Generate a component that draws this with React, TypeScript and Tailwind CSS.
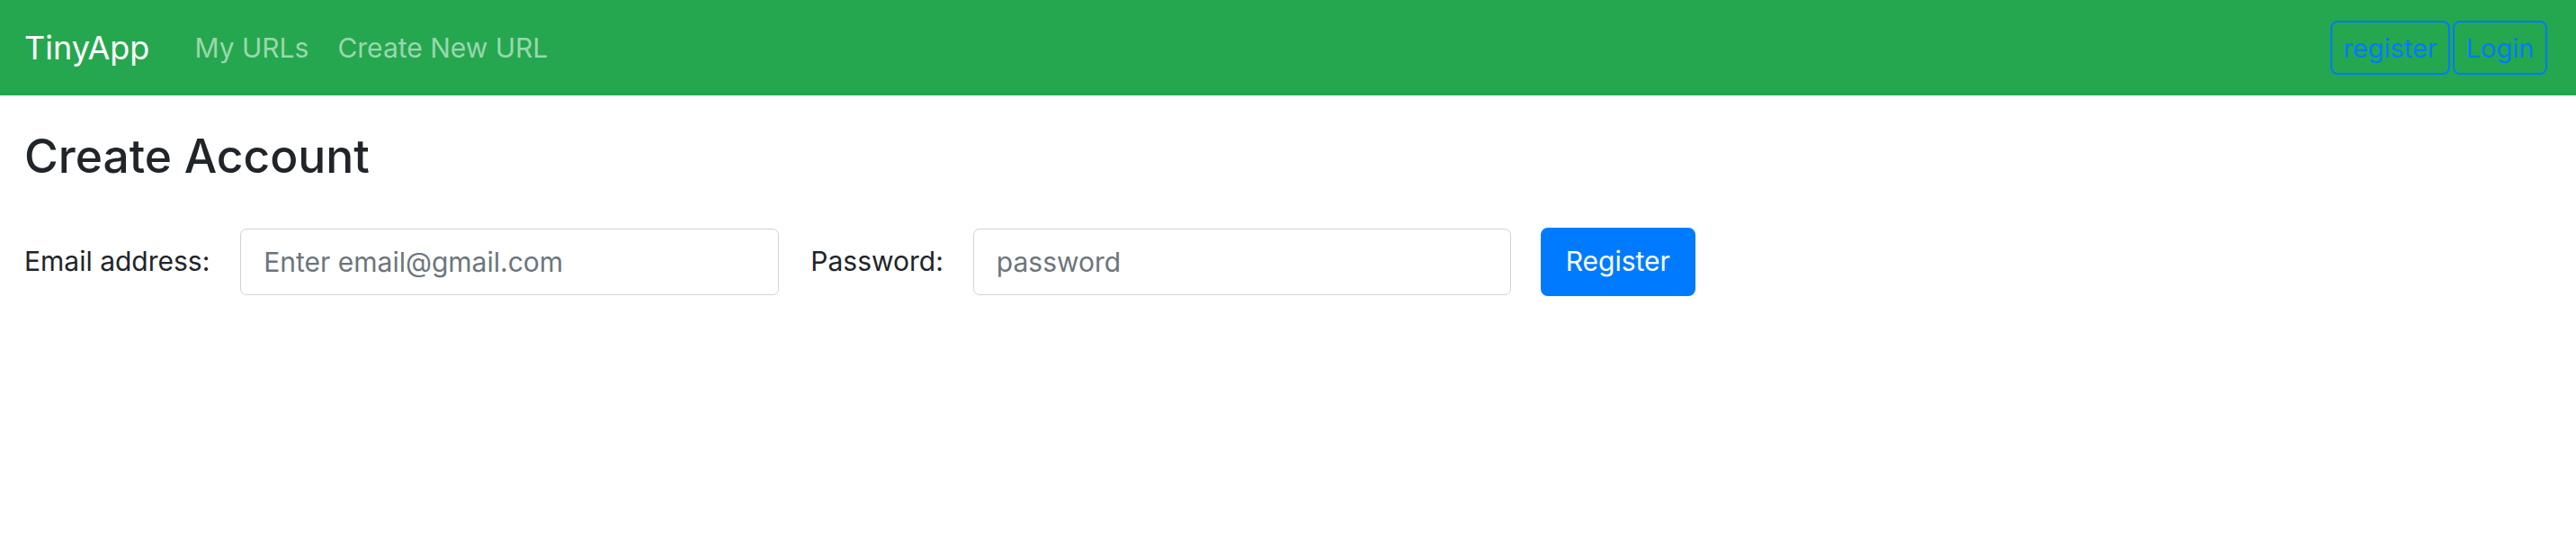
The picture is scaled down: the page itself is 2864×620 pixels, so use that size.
import { useState } from "react";

const NAV_LINKS = ["My URLs", "Create New URL"];

export default function App() {
  const [email, setEmail] = useState("");
  const [password, setPassword] = useState("");

  return (
    <div className="min-h-[620px] bg-white font-['Inter','Liberation_Sans',sans-serif] text-[#212529]">
      {/* Navbar */}
      <nav className="flex h-[106px] items-center bg-[#25a74f] pl-[27px] pr-[32px]">
        <a href="#" className="mr-[34px] text-[36px] leading-none text-white">
          TinyApp
        </a>
        <div className="flex items-center">
          {NAV_LINKS.map((link) => (
            <a
              key={link}
              href="#"
              className="px-[16px] text-[30px] leading-none text-[#9ad7ad]"
            >
              {link}
            </a>
          ))}
        </div>
        <div className="ml-auto flex items-center gap-[3px]">
          <button className="flex h-[60px] w-[133px] items-center justify-center rounded-[8px] border-2 border-[#007bff] text-[29px] leading-none text-[#007bff]">
            register
          </button>
          <button className="flex h-[60px] w-[105px] items-center justify-center rounded-[8px] border-2 border-[#007bff] text-[29px] leading-none text-[#007bff]">
            Login
          </button>
        </div>
      </nav>

      {/* Register form */}
      <main className="px-[27px]">
        <h2 className="mt-[37px] text-[51.5px] font-medium leading-[1.2]">
          Create Account
        </h2>
        <form
          className="mt-[48px] flex items-center"
          onSubmit={(e) => e.preventDefault()}
        >
          <label htmlFor="email" className="mr-[34px] text-[30px]">
            Email address:
          </label>
          <input
            id="email"
            type="email"
            value={email}
            onChange={(e) => setEmail(e.target.value)}
            placeholder="Enter email@gmail.com"
            className="h-[74px] w-[599px] rounded-[7px] border border-[#ced4da] pl-[25px] text-[30px] text-[#495057] outline-none placeholder:text-[#6c757d]"
          />
          <label htmlFor="password" className="ml-[35px] mr-[33px] text-[30px]">
            Password:
          </label>
          <input
            id="password"
            type="password"
            value={password}
            onChange={(e) => setPassword(e.target.value)}
            placeholder="password"
            className="h-[74px] w-[598px] rounded-[7px] border border-[#ced4da] pl-[25px] text-[30px] text-[#495057] outline-none placeholder:text-[#6c757d]"
          />
          <button
            type="submit"
            className="ml-[33px] flex h-[76px] w-[172px] items-center justify-center rounded-[8px] bg-[#007bff] text-[30px] text-white"
          >
            Register
          </button>
        </form>
      </main>
    </div>
  );
}
